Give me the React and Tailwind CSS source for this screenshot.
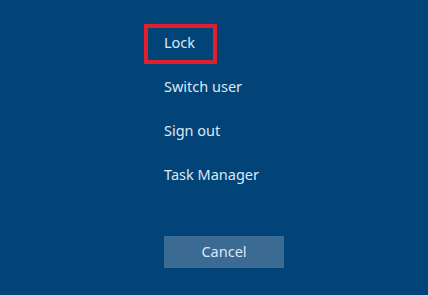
export default function App() {
  const items = ["Switch user", "Sign out", "Task Manager"]

  return (
    <div
      className="w-[428px] h-[295px] bg-[#024478] text-[#dce8f4] overflow-hidden"
      style={{ fontFamily: '"Segoe UI", "Noto Sans", sans-serif' }}
    >
      <div className="pl-[164px] pt-[21px] flex flex-col">
        {/* Lock, focused */}
        <div className="relative h-[44px] flex items-center text-[14.5px]">
          <div className="absolute -left-[20px] top-[3px] w-[73px] h-[40px] border-4 border-[#e0202e]" />
          <span>Lock</span>
        </div>

        {items.map((label) => (
          <div key={label} className="h-[44px] flex items-center text-[14.5px]">
            {label}
          </div>
        ))}

        <button className="mt-[39px] w-[120px] h-[32px] bg-[#3b6a93] text-[14.5px] text-[#dce8f4] flex items-center justify-center">
          Cancel
        </button>
      </div>
    </div>
  )
}
